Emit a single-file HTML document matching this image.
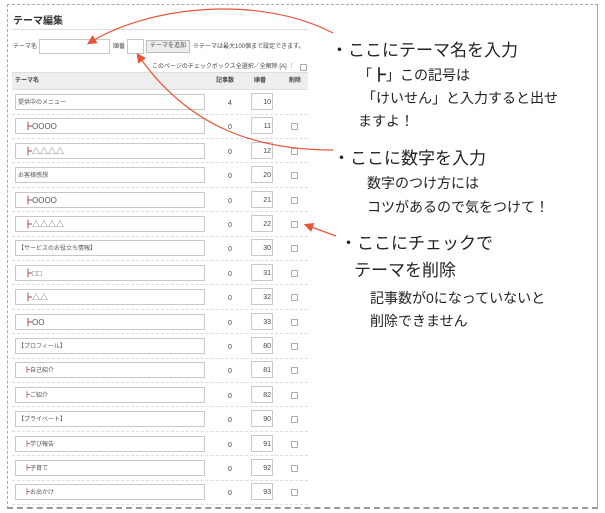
<!DOCTYPE html><html><head><meta charset="utf-8"><style>
*{margin:0;padding:0;box-sizing:border-box}
body{width:605px;height:513px;background:#fff;position:relative;overflow:hidden;font-family:"Liberation Sans","Noto Sans CJK JP",sans-serif;color:#333}
.frame{position:absolute;left:7px;top:4px;width:591px;height:505px;border:1px dashed #aaa;border-right:1px solid #aaa;border-bottom:2px dashed #999}
.a{position:absolute;white-space:nowrap}
.s{font-size:6px;color:#444;line-height:8px}
.inp{position:absolute;border:1px solid #c8c8c8;background:#fff;height:16px}
.cb{position:absolute;width:7px;height:7px;border:1px solid #aaa;border-radius:1px}
.big{font-size:17px;color:#222}
.mid{font-size:14px;color:#222}
.n{position:absolute;font-size:7px;line-height:16px;color:#444;text-align:center}
</style></head><body>
<div class="frame"></div>
<div class="a" style="left:13px;top:12px;font-size:10px;font-weight:bold;color:#333">テーマ編集</div>
<div style="position:absolute;left:12px;top:29px;width:296px;border-top:1px solid #ddd"></div>
<div class="a s" style="left:13px;top:43px">テーマ名</div>
<div class="inp" style="left:39px;top:39px;width:71px;height:15px"></div>
<div class="a s" style="left:113px;top:43px">順番</div>
<div class="inp" style="left:127px;top:39px;width:17px;height:15px"></div>
<div class="a s" style="left:146px;top:40px;width:44px;height:13px;border:1px solid #bbb;background:#eee;text-align:center;line-height:11px">テーマを追加</div>
<div class="a s" style="left:193px;top:43px">※テーマは最大100個まで設定できます。</div>
<div class="a s" style="left:152px;top:63px">このページのチェックボックス全選択／全解除 [A] ：</div>
<div class="cb" style="left:300px;top:64px"></div>
<div style="position:absolute;left:12px;top:72px;width:296px;height:18px;background:#eee;border-top:1px solid #ddd;border-bottom:1px solid #ddd"></div>
<div class="a s" style="left:15px;top:77px;font-weight:bold">テーマ名</div>
<div class="a s" style="left:216px;top:77px;font-weight:bold">記事数</div>
<div class="a s" style="left:254px;top:77px;font-weight:bold">順番</div>
<div class="a s" style="left:289px;top:77px;font-weight:bold">削除</div>
<div id="rows"></div>
<script>
var d=[["提供中のメニュー",4,10],["┣OOOO",0,11],["┣△△△△",0,12],["お客様感想",0,20],["┣OOOO",0,21],["┣△△△△",0,22],["【サービスのお役立ち情報】",0,30],["┣□□",0,31],["┣△△",0,32],["┣OO",0,33],["【プロフィール】",0,80],["┣自己紹介",0,81],["┣ご紹介",0,82],["【プライベート】",0,90],["┣学び報告",0,91],["┣子育て",0,92],["┣お出かけ",0,93]];
var h="";
for(var i=0;i<d.length;i++){var y=94+i*24.4;var t=d[i][0];var ind=t[0]=="┣";var sym=/[O△□]/.test(t);
h+='<div class="inp" style="left:15px;top:'+y+'px;width:190px"></div>';
h+='<div class="a" style="left:'+(ind?24:18)+'px;top:'+(y+1)+'px;line-height:16px;font-size:'+(sym?'8px':'6px')+';color:#555">'+(ind?'<span style="color:#a44">┣</span>'+t.slice(1):t)+'</div>';
h+='<div class="n" style="left:225px;top:'+(y+2)+'px;width:10px">'+d[i][1]+'</div>';
h+='<div class="inp" style="left:251px;top:'+(y-1)+'px;width:22px;height:17px"></div>';
h+='<div class="n" style="left:251px;top:'+(y+1)+'px;width:20px;text-align:right">'+d[i][2]+'</div>';
if(i>0)h+='<div class="cb" style="left:291px;top:'+(y+5)+'px"></div>';
h+='<div style="position:absolute;left:12px;top:'+(y+19.5)+'px;width:296px;border-top:1px dashed #ddd"></div>';}
document.getElementById("rows").innerHTML=h;
</script>
<svg style="position:absolute;left:0;top:0" width="605" height="513">
<defs><marker id="m" markerWidth="8" markerHeight="8" refX="6" refY="4" orient="auto"><path d="M0,0 L8,4 L0,8z" fill="#e8553a"/></marker></defs>
<g fill="none" stroke="#e8553a" stroke-width="1.2">
<path d="M333,33 C260,-5 150,5 89,43" marker-end="url(#m)"/>
<path d="M333,150 C260,150 190,130 138,55" marker-end="url(#m)"/>
<path d="M336,236 L306,225" marker-end="url(#m)"/>
</g></svg>
<div class="a big" style="left:331px;top:36px">・ここにテーマ名を入力</div>
<div class="a mid" style="left:358px;top:65px">「┣」この記号は</div>
<div class="a mid" style="left:362px;top:88px">「けいせん」と入力すると出せ</div>
<div class="a mid" style="left:358px;top:111px">ますよ！</div>
<div class="a big" style="left:333px;top:144px">・ここに数字を入力</div>
<div class="a mid" style="left:367px;top:173px">数字のつけ方には</div>
<div class="a mid" style="left:367px;top:197px">コツがあるので気をつけて！</div>
<div class="a big" style="left:340px;top:229px">・ここにチェックで</div>
<div class="a big" style="left:354px;top:256px">テーマを削除</div>
<div class="a mid" style="left:370px;top:288px">記事数が0になっていないと</div>
<div class="a mid" style="left:370px;top:311px">削除できません</div>
</body></html>
